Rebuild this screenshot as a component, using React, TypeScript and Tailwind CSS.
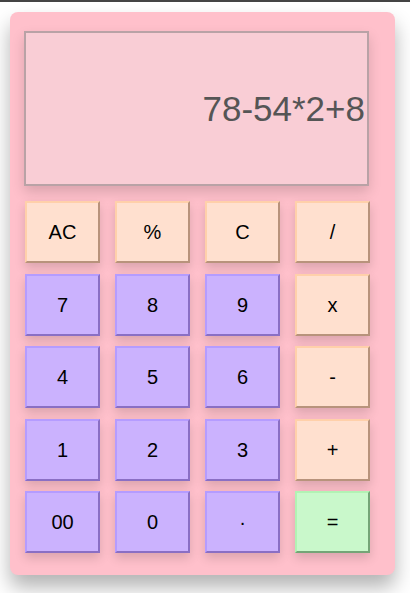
import React from 'react'

type Kind = 'op' | 'num' | 'eq'

const keys: { label: string; kind: Kind }[] = [
  { label: 'AC', kind: 'op' },
  { label: '%', kind: 'op' },
  { label: 'C', kind: 'op' },
  { label: '/', kind: 'op' },
  { label: '7', kind: 'num' },
  { label: '8', kind: 'num' },
  { label: '9', kind: 'num' },
  { label: 'x', kind: 'op' },
  { label: '4', kind: 'num' },
  { label: '5', kind: 'num' },
  { label: '6', kind: 'num' },
  { label: '-', kind: 'op' },
  { label: '1', kind: 'num' },
  { label: '2', kind: 'num' },
  { label: '3', kind: 'num' },
  { label: '+', kind: 'op' },
  { label: '00', kind: 'num' },
  { label: '0', kind: 'num' },
  { label: '·', kind: 'num' },
  { label: '=', kind: 'eq' },
]

const kindClass: Record<Kind, string> = {
  op: 'bg-[#ffe0cf] border-t-[#ffd0aa] border-l-[#ffd0aa] border-b-[#b8937c] border-r-[#b8937c]',
  num: 'bg-[#cbb2fe] border-t-[#b59cff] border-l-[#b59cff] border-b-[#8a6fc4] border-r-[#8a6fc4]',
  eq: 'bg-[#c9f8cb] border-t-[#b2f2b4] border-l-[#b2f2b4] border-b-[#74a577] border-r-[#74a577]',
}

export default function App() {
  return (
    <div className="w-[410px] h-[593px] bg-white overflow-hidden font-['Liberation_Sans',Arial,sans-serif]">
      <div className="h-[2px] bg-[#444]" />
      <div className="pt-[10px] pl-[10px]">
        <div className="w-[385px] h-[563px] rounded-lg bg-[#ffc0cb] shadow-[0_12px_20px_rgba(0,0,0,0.3)] pt-[19px] pl-[14px]">
          {/* Display */}
          <div className="w-[345px] h-[155px] border-2 border-[#b9a2a6] bg-[#f9cdd5] shadow-[0_6px_12px_rgba(0,0,0,0.15)] flex items-center justify-end pr-[2px]">
            <span className="text-[35px] text-[#555] leading-none">78-54*2+8</span>
          </div>

          {/* Keys */}
          <div className="mt-[15px] ml-[1px] grid grid-cols-[repeat(4,75px)] gap-x-[15px] gap-y-[10.5px]">
            {keys.map((k) => (
              <button
                key={k.label}
                className={`h-[62px] border-2 flex items-center justify-center text-[20px] text-black shadow-[0_5px_10px_rgba(0,0,0,0.15)] ${kindClass[k.kind]}`}
              >
                {k.label}
              </button>
            ))}
          </div>
        </div>
      </div>
    </div>
  )
}
